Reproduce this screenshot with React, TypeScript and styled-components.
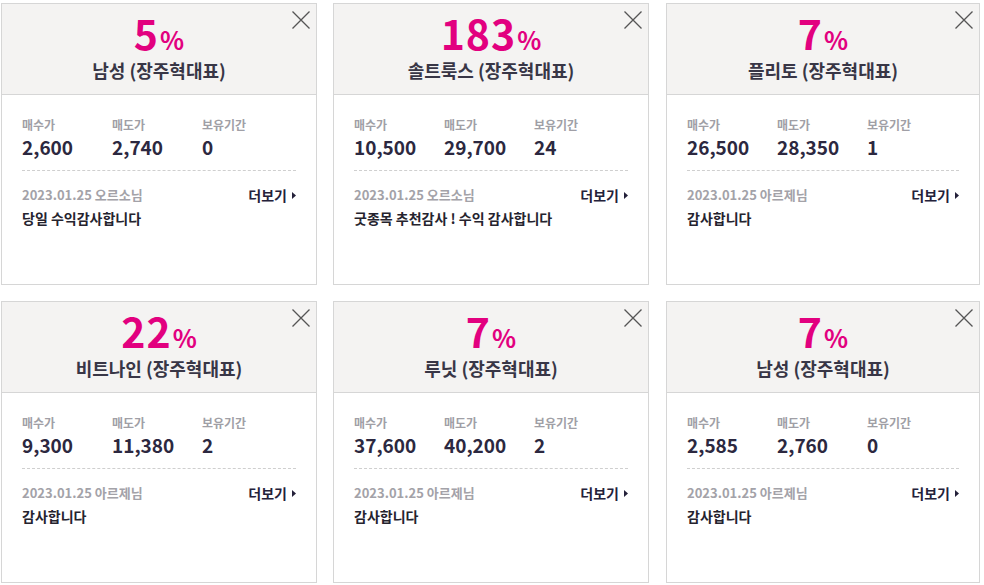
import React from "react";
import styled, { createGlobalStyle } from "styled-components";

const GlobalStyle = createGlobalStyle`
  html, body { margin: 0; padding: 0; background: #ffffff; }
  body { font-family: "Noto Sans CJK KR", "Noto Sans", sans-serif; }
`;

type Item = {
  pct: string;
  name: string;
  buy: string;
  sell: string;
  hold: string;
  user: string;
  comment: string;
};

const items: Item[] = [
  { pct: "5", name: "남성 (장주혁대표)", buy: "2,600", sell: "2,740", hold: "0", user: "오르소님", comment: "당일 수익감사합니다" },
  { pct: "183", name: "솔트룩스 (장주혁대표)", buy: "10,500", sell: "29,700", hold: "24", user: "오르소님", comment: "굿종목 추천감사 ! 수익 감사합니다" },
  { pct: "7", name: "플리토 (장주혁대표)", buy: "26,500", sell: "28,350", hold: "1", user: "아르제님", comment: "감사합니다" },
  { pct: "22", name: "비트나인 (장주혁대표)", buy: "9,300", sell: "11,380", hold: "2", user: "아르제님", comment: "감사합니다" },
  { pct: "7", name: "루닛 (장주혁대표)", buy: "37,600", sell: "40,200", hold: "2", user: "아르제님", comment: "감사합니다" },
  { pct: "7", name: "남성 (장주혁대표)", buy: "2,585", sell: "2,760", hold: "0", user: "아르제님", comment: "감사합니다" },
];

const Grid = styled.div`
  display: grid;
  grid-template-columns: 316px 316px 315px;
  column-gap: 16px;
  row-gap: 16px;
  padding: 3px 0 0 1px;
  & > :nth-child(3n) {
    margin-left: 1px;
  }
`;

const Card = styled.div`
  height: 282px;
  box-sizing: border-box;
  border: 1px solid #d6d6d6;
  background: #fff;
  position: relative;
  display: flex;
  flex-direction: column;
`;

const Header = styled.div`
  height: 91px;
  box-sizing: border-box;
  background: #f4f3f2;
  border-bottom: 1px solid #d6d6d6;
  display: flex;
  flex-direction: column;
  align-items: center;
  padding-top: 6px;
`;

const Percent = styled.div`
  color: #e2007f;
  font-weight: 700;
  font-size: 41px;
  line-height: 44px;
  letter-spacing: 1px;
  display: flex;
  align-items: baseline;
`;

const PctSign = styled.span`
  font-size: 25px;
  letter-spacing: 0;
  margin-left: 1px;
`;

const Title = styled.div`
  color: #383646;
  font-size: 18px;
  font-weight: 700;
  line-height: 24px;
  margin-top: -3px;
`;

const Close = styled.button`
  position: absolute;
  top: 7px;
  right: 6px;
  width: 18px;
  height: 18px;
  padding: 0;
  border: 0;
  background: transparent;
  display: flex;
`;

const Body = styled.div`
  padding: 22px 20px 0 20px;
  display: flex;
  flex-direction: column;
`;

const Stats = styled.div`
  display: grid;
  grid-template-columns: 90px 90px 1fr;
  padding-bottom: 12px;
  border-bottom: 1px dashed #cfcfcf;
`;

const Stat = styled.div`
  display: flex;
  flex-direction: column;
`;

const Label = styled.div`
  color: #a09fa6;
  font-size: 12px;
  font-weight: 700;
  line-height: 16px;
`;

const Value = styled.div`
  color: #2c2840;
  font-size: 19px;
  font-weight: 700;
  line-height: 22px;
  margin-top: 3px;
`;

const MetaRow = styled.div`
  display: flex;
  justify-content: space-between;
  align-items: center;
  margin-top: 15px;
  line-height: 18px;
`;

const Meta = styled.div`
  color: #a3a2a8;
  font-size: 13px;
  font-weight: 700;
`;

const More = styled.a`
  color: #24213a;
  font-size: 14px;
  font-weight: 700;
  display: flex;
  align-items: center;
  gap: 5px;
`;

const Comment = styled.div`
  color: #25232e;
  font-size: 14px;
  font-weight: 700;
  line-height: 18px;
  margin-top: 5px;
`;

const CloseIcon = () => (
  <svg width="18" height="18" viewBox="0 0 18 18">
    <path d="M0.5 0.5 L17.5 17.5 M17.5 0.5 L0.5 17.5" stroke="#555" strokeWidth="1.3" fill="none" />
  </svg>
);

const Arrow = () => (
  <svg width="4" height="7" viewBox="0 0 4 7">
    <path d="M0 0 L4 3.5 L0 7 Z" fill="#24213a" />
  </svg>
);

const CardView = ({ it }: { it: Item }) => (
  <Card>
    <Header>
      <Percent>
        {it.pct}
        <PctSign>%</PctSign>
      </Percent>
      <Title>{it.name}</Title>
    </Header>
    <Close aria-label="닫기">
      <CloseIcon />
    </Close>
    <Body>
      <Stats>
        <Stat>
          <Label>매수가</Label>
          <Value>{it.buy}</Value>
        </Stat>
        <Stat>
          <Label>매도가</Label>
          <Value>{it.sell}</Value>
        </Stat>
        <Stat>
          <Label>보유기간</Label>
          <Value>{it.hold}</Value>
        </Stat>
      </Stats>
      <MetaRow>
        <Meta>2023.01.25 {it.user}</Meta>
        <More>
          더보기
          <Arrow />
        </More>
      </MetaRow>
      <Comment>{it.comment}</Comment>
    </Body>
  </Card>
);

export default function App() {
  return (
    <>
      <GlobalStyle />
      <Grid>
        {items.map((it, i) => (
          <CardView key={i} it={it} />
        ))}
      </Grid>
    </>
  );
}
